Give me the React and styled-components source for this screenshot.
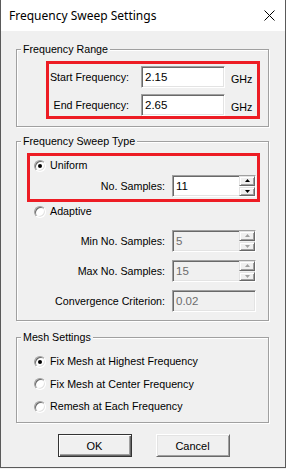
import React from "react"
import styled, { createGlobalStyle } from "styled-components"

const GlobalStyle = createGlobalStyle`
    html, body {
        margin: 0;
        padding: 0;
        background: #f0f0f0;
    }
    body {
        font-family: "Liberation Sans", Arial, sans-serif;
        font-size: 10.7px;
        color: #000;
    }
`

const Window = styled.div`
    width: 286px;
    height: 468px;
    box-sizing: border-box;
    border: 1px solid #5a5a5a;
    border-top: none;
    background: #f0f0f0;
    display: flex;
    flex-direction: column;
`

const TitleBar = styled.div`
    height: 31px;
    flex-shrink: 0;
    background: #fff;
    display: flex;
    align-items: center;
    justify-content: space-between;
    padding: 0 10px 0 8px;
    font-family: "Noto Sans", "Open Sans", sans-serif;
    font-size: 12px;
    color: #000;
`

const Body = styled.div`
    padding: 12px 16px 8px 15px;
    display: flex;
    flex-direction: column;
    gap: 8px;
`

const Group = styled.fieldset`
    margin: ${(p) => p.$margin || "0"};
    padding: 0;
    min-width: 0;
    border: 1px solid #a0a0a0;
    box-shadow: inset 1px 1px 0 #fff, 1px 1px 0 #fff;

    > legend {
        margin-left: 4px;
        padding: 0 2px;
        height: 13px;
        line-height: 13px;
        background: #f0f0f0;
    }
`

const GroupContent = styled.div`
    padding: ${(p) => p.$pad};
    display: flex;
    flex-direction: column;
`

const Highlight = styled.div`
    border: 3px solid #ed1c24;
    margin: ${(p) => p.$margin || "0"};
    padding: ${(p) => p.$pad};
    display: flex;
    flex-direction: column;
    gap: ${(p) => p.$gap || "0"};
`

const FieldGrid = styled.div`
    display: grid;
    grid-template-columns: ${(p) => p.$cols};
    column-gap: ${(p) => p.$colGap};
    row-gap: ${(p) => p.$rowGap || "0"};
    align-items: center;
    margin: ${(p) => p.$margin || "0"};
`

const Label = styled.span`
    text-align: right;
    white-space: nowrap;
`

const Unit = styled.span`
    margin-left: -6px;
    padding-top: 4px;
`

const Input = styled.div`
    box-sizing: border-box;
    width: 84px;
    height: 22px;
    display: flex;
    align-items: center;
    border: 1px solid;
    border-color: #a0a0a0 #fff #fff #a0a0a0;
    box-shadow: inset 1px 1px 0 #696969, inset -1px -1px 0 #e3e3e3;
    background: ${(p) => (p.$disabled ? "#f0f0f0" : "#fff")};
    color: ${(p) => (p.$disabled ? "#6d6d6d" : "#000")};
    padding: 0 0 0 3px;
    font-size: 11.5px;
`

const Spinner = styled.div`
    margin-left: auto;
    width: 16px;
    height: 20px;
    display: flex;
    flex-direction: column;
    gap: 1px;
`

const SpinButton = styled.div`
    flex: 1;
    box-sizing: border-box;
    display: flex;
    align-items: center;
    justify-content: center;
    background: #f0f0f0;
    border: 1px solid;
    border-color: #e3e3e3 #696969 #696969 #e3e3e3;
    box-shadow: inset 1px 1px 0 #fff, inset -1px -1px 0 #a0a0a0;
`

const RadioRow = styled.label`
    display: flex;
    align-items: center;
    gap: 4px;
    height: 13px;
    line-height: 13px;
    margin: ${(p) => p.$margin || "0"};
`

const RadioCircle = styled.span`
    width: 12px;
    height: 12px;
    box-sizing: border-box;
    border-radius: 50%;
    background: #fff;
    border: 1px solid;
    border-color: #a0a0a0 #fff #fff #a0a0a0;
    box-shadow: inset 1px 1px 0 #696969, inset -1px -1px 0 #e3e3e3;
    display: flex;
    align-items: center;
    justify-content: center;

    &::after {
        content: "";
        width: 4px;
        height: 4px;
        border-radius: 50%;
        background: ${(p) => (p.$checked ? "#000" : "transparent")};
    }
`

const RadioList = styled.div`
    display: flex;
    flex-direction: column;
    gap: 9.5px;
`

const ButtonRow = styled.div`
    display: flex;
    justify-content: center;
    gap: 24px;
    margin-top: 3px;
    padding-left: 2px;
`

const Button = styled.div`
    box-sizing: border-box;
    width: 74px;
    height: 23px;
    display: flex;
    align-items: center;
    justify-content: center;
    background: #f0f0f0;
    font-size: 11px;
    border: 1px solid;
    border-color: ${(p) => (p.$default ? "#333" : "#fff #696969 #696969 #fff")};
    box-shadow: ${(p) =>
        p.$default
            ? "inset 1px 1px 0 #fff, inset -1px -1px 0 #696969, inset -2px -2px 0 #a0a0a0"
            : "inset 1px 1px 0 #e3e3e3, inset -1px -1px 0 #a0a0a0"};
`

function Arrow({ up, disabled }) {
    return (
        <svg width="5" height="3" viewBox="0 0 5 3">
            <polygon
                points={up ? "2.5,0 5,3 0,3" : "0,0 5,0 2.5,3"}
                fill={disabled ? "#a0a0a0" : "#000"}
            />
        </svg>
    )
}

function SpinField({ value, disabled }) {
    return (
        <Input $disabled={disabled}>
            {value}
            <Spinner>
                <SpinButton><Arrow up disabled={disabled} /></SpinButton>
                <SpinButton><Arrow disabled={disabled} /></SpinButton>
            </Spinner>
        </Input>
    )
}

function Radio({ checked, children, margin }) {
    return (
        <RadioRow $margin={margin}>
            <RadioCircle $checked={checked} />
            {children}
        </RadioRow>
    )
}

export default function App() {
    return (
        <>
            <GlobalStyle />
            <Window>
                <TitleBar>
                    <span>Frequency Sweep Settings</span>
                    <svg width="11" height="11" viewBox="0 0 11 11">
                        <path d="M0.5 0.5 L10.5 10.5 M10.5 0.5 L0.5 10.5" stroke="#000" strokeWidth="1" />
                    </svg>
                </TitleBar>
                <Body>
                    <Group>
                        <legend>Frequency Range</legend>
                        <GroupContent $pad="5px 8px 7px 29px">
                            <Highlight $pad="2px 0 0 0">
                                <FieldGrid $cols="80px 84px auto" $colGap="12px" $rowGap="6px">
                                    <Label>Start Frequency:</Label>
                                    <Input>2.15</Input>
                                    <Unit>GHz</Unit>
                                    <Label>End Frequency:</Label>
                                    <Input>2.65</Input>
                                    <Unit>GHz</Unit>
                                </FieldGrid>
                            </Highlight>
                        </GroupContent>
                    </Group>

                    <Group>
                        <legend>Frequency Sweep Type</legend>
                        <GroupContent $pad="5px 0 8px 0">
                            <Highlight $margin="0 8px 0 10px" $pad="3px 1px 2px 4px" $gap="3px">
                                <Radio checked>Uniform</Radio>
                                <FieldGrid $cols="1fr 84px" $colGap="7px">
                                    <Label>No. Samples:</Label>
                                    <SpinField value="11" />
                                </FieldGrid>
                            </Highlight>
                            <Radio margin="3px 0 0 17px">Adaptive</Radio>
                            <FieldGrid $cols="1fr 84px" $colGap="7px" $rowGap="8px" $margin="12px 12px 0 0">
                                <Label>Min No. Samples:</Label>
                                <SpinField value="5" disabled />
                                <Label>Max No. Samples:</Label>
                                <SpinField value="15" disabled />
                                <Label>Convergence Criterion:</Label>
                                <Input $disabled>0.02</Input>
                            </FieldGrid>
                        </GroupContent>
                    </Group>

                    <Group $margin="2px 0 0 0">
                        <legend>Mesh Settings</legend>
                        <GroupContent $pad="11px 0 9px 17px">
                            <RadioList>
                                <Radio checked>Fix Mesh at Highest Frequency</Radio>
                                <Radio>Fix Mesh at Center Frequency</Radio>
                                <Radio>Remesh at Each Frequency</Radio>
                            </RadioList>
                        </GroupContent>
                    </Group>

                    <ButtonRow>
                        <Button $default>OK</Button>
                        <Button>Cancel</Button>
                    </ButtonRow>
                </Body>
            </Window>
        </>
    )
}
